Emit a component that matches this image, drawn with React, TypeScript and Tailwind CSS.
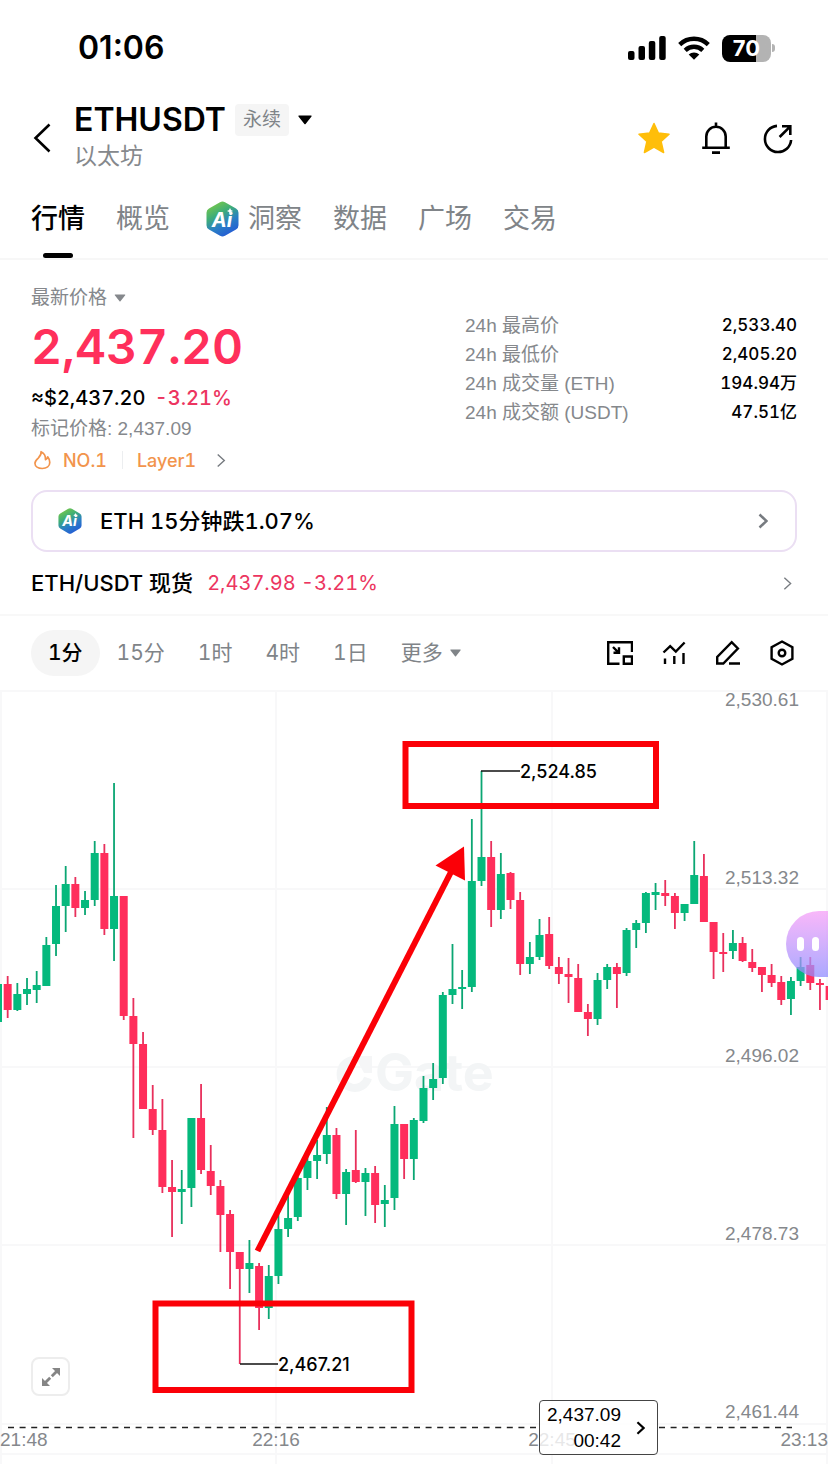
import { useId, useState } from "react";

type Candle = {
  up: boolean;
  high: number;
  low: number;
  top: number;
  bottom: number;
};

// [direction, high, low, body top, body bottom] in chart units
const rawCandles: [string, number, number, number, number][] = [
  ["u", 984, 1022, 984, 1022],
  ["d", 976, 1018, 984, 1010],
  ["u", 983, 1011, 994, 1010],
  ["u", 978, 1005, 989, 994],
  ["u", 971, 1003, 985, 990],
  ["u", 937, 986, 945, 986],
  ["u", 885, 956, 906, 944],
  ["u", 866, 932, 884, 906],
  ["d", 877, 917, 884, 908],
  ["u", 891, 915, 900, 908],
  ["u", 841, 906, 853, 900],
  ["d", 844, 935, 853, 929],
  ["u", 783, 961, 896, 929],
  ["d", 896, 1020, 896, 1016],
  ["d", 998, 1138, 1016, 1044],
  ["d", 1032, 1109, 1044, 1109],
  ["d", 1085, 1135, 1109, 1130],
  ["d", 1099, 1193, 1130, 1187],
  ["d", 1160, 1237, 1187, 1192],
  ["u", 1170, 1224, 1189, 1192],
  ["u", 1118, 1207, 1118, 1188],
  ["d", 1084, 1174, 1118, 1170],
  ["d", 1145, 1195, 1171, 1186],
  ["d", 1180, 1252, 1186, 1215],
  ["d", 1210, 1289, 1214, 1252],
  ["d", 1252, 1364, 1252, 1269],
  ["u", 1240, 1293, 1263, 1269],
  ["d", 1263, 1330, 1266, 1308],
  ["u", 1265, 1319, 1276, 1308],
  ["u", 1214, 1284, 1229, 1276],
  ["u", 1196, 1237, 1218, 1229],
  ["u", 1177, 1221, 1178, 1217],
  ["u", 1156, 1190, 1161, 1178],
  ["u", 1140, 1179, 1155, 1161],
  ["u", 1107, 1164, 1135, 1154],
  ["d", 1128, 1199, 1135, 1194],
  ["u", 1169, 1225, 1172, 1194],
  ["d", 1130, 1183, 1170, 1182],
  ["u", 1168, 1216, 1173, 1182],
  ["d", 1166, 1223, 1173, 1205],
  ["u", 1185, 1227, 1200, 1204],
  ["u", 1106, 1210, 1124, 1198],
  ["d", 1124, 1179, 1124, 1159],
  ["u", 1118, 1180, 1120, 1159],
  ["u", 1076, 1123, 1088, 1121],
  ["u", 1063, 1100, 1079, 1088],
  ["u", 992, 1084, 995, 1078],
  ["u", 944, 1004, 989, 995],
  ["u", 970, 1009, 987, 989],
  ["u", 819, 992, 881, 987],
  ["u", 771, 886, 857, 881],
  ["d", 841, 927, 857, 910],
  ["u", 853, 919, 874, 910],
  ["d", 872, 909, 873, 900],
  ["d", 892, 975, 900, 964],
  ["u", 942, 974, 957, 964],
  ["u", 919, 960, 935, 957],
  ["d", 917, 969, 934, 966],
  ["d", 957, 984, 967, 974],
  ["d", 958, 1003, 974, 977],
  ["d", 964, 1012, 978, 1012],
  ["d", 1004, 1036, 1012, 1019],
  ["u", 973, 1025, 980, 1019],
  ["u", 964, 989, 967, 980],
  ["d", 963, 1008, 967, 974],
  ["u", 928, 976, 930, 973],
  ["u", 920, 948, 923, 930],
  ["u", 892, 933, 893, 923],
  ["u", 883, 910, 892, 895],
  ["d", 880, 906, 893, 896],
  ["d", 893, 929, 896, 913],
  ["u", 904, 921, 904, 913],
  ["u", 841, 904, 875, 904],
  ["d", 854, 922, 876, 922],
  ["d", 922, 979, 922, 952],
  ["d", 933, 972, 952, 954],
  ["u", 930, 959, 943, 951],
  ["d", 937, 962, 943, 961],
  ["d", 949, 972, 962, 968],
  ["d", 967, 992, 967, 975],
  ["d", 964, 987, 975, 983],
  ["d", 976, 1005, 982, 1000],
  ["u", 977, 1015, 981, 999],
  ["u", 957, 986, 967, 981],
  ["d", 957, 990, 965, 983],
  ["d", 979, 1010, 983, 985],
  ["d", 986, 1000, 986, 1000],
];

const candles: Candle[] = rawCandles.map(([dir, high, low, top, bottom]) => ({
  up: dir === "u",
  high,
  low,
  top,
  bottom,
}));

const CANDLE_STEP = 9.67;
const FIRST_X = -2;

const tabs = ["行情", "概览", "洞察", "数据", "广场", "交易"];
const intervals = ["1分", "15分", "1时", "4时", "1日"];

const stats = [
  { label: "24h 最高价", value: "2,533.40" },
  { label: "24h 最低价", value: "2,405.20" },
  { label: "24h 成交量 (ETH)", value: "194.94万" },
  { label: "24h 成交额 (USDT)", value: "47.51亿" },
];

const priceAxis = [
  { label: "2,530.61", y: 706 },
  { label: "2,513.32", y: 884 },
  { label: "2,496.02", y: 1062 },
  { label: "2,478.73", y: 1240 },
  { label: "2,461.44", y: 1418 },
];

function AiLogo({ className }: { className: string }) {
  const id = useId();
  return (
    <svg viewBox="0 0 33 36" className={className} aria-hidden="true">
      <defs>
        <linearGradient id={id} x1="0.2" y1="0" x2="0.7" y2="1">
          <stop offset="0" stopColor="#7ccb46" />
          <stop offset="0.35" stopColor="#3fae77" />
          <stop offset="0.65" stopColor="#2b80c4" />
          <stop offset="1" stopColor="#2459d6" />
        </linearGradient>
      </defs>
      <path
        d="M14 1.2a5 5 0 0 1 5 0l11 6.3a5 5 0 0 1 2.5 4.3v12.4a5 5 0 0 1-2.5 4.3l-11 6.3a5 5 0 0 1-5 0L3 28.5A5 5 0 0 1 .5 24.200V11.800A5 5 0 0 1 3 7.500z"
        fill={`url(#${id})`}
      />
      <text x="16" y="25.500" textAnchor="middle" fontSize="20" fontWeight="700" fontStyle="italic" fill="#fff">
        Ai
      </text>
      <path d="M24 7l1 2 2 1-2 1-1 2-1-2-2-1 2-1z" fill="#fff" />
    </svg>
  );
}

function Chevron({ className }: { className: string }) {
  return (
    <svg viewBox="0 0 10 16" fill="none" stroke="currentColor" className={className} aria-hidden="true">
      <path d="M1.500 1.500L8.500 8l-7 6.500" />
    </svg>
  );
}

function Caret({ className }: { className: string }) {
  return (
    <svg viewBox="0 0 14 10" fill="currentColor" className={className} aria-hidden="true">
      <path d="M1 .5h12a.6.6 0 0 1 .5 1L7.600 9a.8.8 0 0 1-1.200 0L.5 1.500a.6.6 0 0 1 .5-1z" />
    </svg>
  );
}

function StatusBar() {
  return (
    <div className="flex h-24 items-center justify-between pr-[53px] pl-[78px]">
      <span className="text-[32px] font-semibold">01:06</span>
      <div className="flex items-center gap-3">
        <svg viewBox="0 0 38 24" className="h-6 w-[38px]" aria-hidden="true">
          <rect x="0" y="15" width="6.500" height="9" rx="2" />
          <rect x="10.500" y="10" width="6.500" height="14" rx="2" />
          <rect x="20.800" y="5" width="6.500" height="19" rx="2" />
          <rect x="31.200" y="0" width="6.500" height="24" rx="2" />
        </svg>
        <svg viewBox="0 0 32 24" className="h-6 w-8" aria-hidden="true">
          <g fill="none" stroke="#000" strokeWidth="4.400">
            <path d="M1.700 8.600a20.500 20.500 0 0 1 28.600 0" />
            <path d="M7.200 14.300a12.700 12.700 0 0 1 17.600 0" />
          </g>
          <path d="M16 23.800l-5.300-5.300a7.700 7.700 0 0 1 10.600 0z" />
        </svg>
        <div className="flex items-center gap-px">
          <div className="flex h-[27px] w-[49px] items-center justify-center rounded-[8px] bg-linear-to-r from-black from-70% to-[#b3b3b3] to-70%">
            <span className="text-[22px] font-bold text-white">70</span>
          </div>
          <span className="h-2 w-[3px] rounded-r-full bg-[#b3b3b3]" />
        </div>
      </div>
    </div>
  );
}

function Header() {
  return (
    <header className="flex h-[84px] items-center justify-between pr-[34px] pl-[33px]">
      <div className="flex items-center gap-[22px]">
        <button type="button" aria-label="返回">
          <svg viewBox="0 0 19 30" className="h-[30px] w-[19px]" fill="none" stroke="#000" strokeWidth="2.600">
            <path d="M16.500 1.500L2.500 15l14 13.500" />
          </svg>
        </button>
        <div className="flex flex-col">
          <button type="button" className="flex h-9 items-center">
            <h1 className="text-[32px] font-semibold">ETHUSDT</h1>
            <span className="ml-[9px] rounded bg-[#f5f5f5] px-2 py-[3px] text-[19px] leading-[26px] text-[#808488]">
              永续
            </span>
            <Caret className="ml-[9px] h-[10px] w-[14px]" />
          </button>
          <p className="text-[23px] leading-[36px] text-[#85888c]">以太坊</p>
        </div>
      </div>
      <div className="flex items-center gap-[30px]">
        <button type="button" aria-label="收藏">
          <svg viewBox="0 0 32 32" className="size-8" fill="#ffbe0a" stroke="#ffbe0a" strokeWidth="1.500" strokeLinejoin="round">
            <path d="M16 1.500l4.400 9.600 10.600 1.200-7.900 7.100 2.500 11.100L16 25.100l-9.600 5.400 2.500-11.100L1 12.300l10.600-1.200z" />
          </svg>
        </button>
        <button type="button" aria-label="提醒">
          <svg viewBox="0 0 32 32" className="size-8" fill="none" stroke="#000" strokeWidth="2.600">
            <path d="M6.300 26V14.500a9.700 9.700 0 0 1 19.400 0V26M2.200 25.800h27.600M16 4.800V.500M12 30.600h8" />
          </svg>
        </button>
        <button type="button" aria-label="分享">
          <svg viewBox="0 0 32 32" className="size-8" fill="none" stroke="#000" strokeWidth="2.600">
            <path d="M15 3.900A13.100 13.100 0 1 0 29.100 18M17.600 15L28.300 4.300M20 4.300h8.300v8.600" />
          </svg>
        </button>
      </div>
    </header>
  );
}

function Tabs() {
  const [active, setActive] = useState("行情");
  return (
    <nav className="flex h-20 gap-[31px] border-b-2 border-[#f7f7f7] px-[31px]">
      {tabs.map((tab) => (
        <button
          key={tab}
          type="button"
          onClick={() => setActive(tab)}
          className={`relative flex items-center gap-[9px] text-[27px] ${
            active === tab ? "font-medium text-black" : "text-[#808488]"
          } ${tab === "洞察" ? "pl-[5px]" : ""}`}
        >
          {tab === "洞察" && <AiLogo className="h-9 w-[33px]" />}
          {tab}
          {active === tab && (
            <span className="absolute bottom-0 left-1/2 h-[5px] w-[30px] -translate-x-1/2 rounded-full bg-black" />
          )}
        </button>
      ))}
    </nav>
  );
}

function PriceSummary() {
  return (
    <section className="flex justify-between px-[31px] pt-[23px] tabular-nums">
      <div>
        <button type="button" className="flex h-[30px] items-center gap-[7px] text-[19px] text-[#85888c]">
          最新价格
          <Caret className="h-2 w-3" />
        </button>
        <p className="text-[48px] leading-[68px] font-semibold text-[#ff2f5b]">2,437.20</p>
        <p className="text-[20px] leading-[34px] font-medium">
          ≈$2,437.20 <span className="ml-1 text-[#ec3560]">-3.21%</span>
        </p>
        <p className="font-['Liberation_Sans','Noto_Sans_CJK_SC',sans-serif] text-[19px] leading-7 text-[#85888c]">
          标记价格: 2,437.09
        </p>
        <a href="#rank" className="flex h-[34px] items-center text-[18px] font-medium text-[#f2944c]">
          <svg viewBox="0 0 18 20" className="mr-[12px] ml-[3px] h-5 w-[17px]" fill="none" stroke="currentColor" strokeWidth="1.800" strokeLinejoin="round">
            <path d="M7.500 1.200c.6 3.200-.9 4.700-3 6.700C2.600 9.600 1 11.200 1 13.500 1 16.800 4.400 19 8.700 19c4.600 0 8-2.500 8-6.300 0-2.400-.9-4.500-2.200-6-.2 1.600-1 2.500-2.300 3C12.400 6 10.800 2.700 7.500 1.200z" />
          </svg>
          NO.1
          <span className="mr-[14px] ml-[15px] h-[18px] w-px bg-[#eceef0]" />
          Layer1
          <Chevron className="ml-5 h-[15px] w-[10px] stroke-[1.5] text-[#777b80]" />
        </a>
      </div>
      <table className="mt-7 h-[116px] w-[332px] border-collapse self-start">
        <tbody>
          {stats.map((s) => (
            <tr key={s.label} className="h-[29px]">
              <th
                scope="row"
                className="p-0 text-left font-['Liberation_Sans','Noto_Sans_CJK_SC',sans-serif] text-[19px] leading-[29px] font-normal text-[#85888c]"
              >
                {s.label}
              </th>
              <td className="p-0 text-right text-[17px] leading-[29px] font-medium">{s.value}</td>
            </tr>
          ))}
        </tbody>
      </table>
    </section>
  );
}

function Toolbar() {
  const [interval, setInterval] = useState("1分");
  return (
    <div className="flex h-[76px] items-center justify-between border-t-2 border-[#f8f8f8] pr-[33px] pl-[31px]">
      <div className="flex items-center gap-[33px] text-[21px] text-[#808488] tabular-nums">
        {intervals.map((item) => (
          <button
            key={item}
            type="button"
            onClick={() => setInterval(item)}
            className={
              interval === item
                ? "-mr-4 h-[46px] rounded-full bg-[#f5f5f5] px-[17px] font-medium text-black"
                : "h-[46px]"
            }
          >
            {item}
          </button>
        ))}
        <button type="button" className="flex items-center gap-[7px]">
          更多
          <Caret className="h-2 w-[11px]" />
        </button>
      </div>
      <div className="flex gap-7">
        <button type="button" aria-label="小窗">
          <svg viewBox="0 0 26 26" className="size-[26px]" fill="none" stroke="#000" strokeWidth="2.400">
            <path d="M25 12V2.200H1.200V23.800H12.500M16.800 16.500h8.200v7.300h-8.200zM6 7l5.600 5.600M12 7.200v5.600H6.500" />
          </svg>
        </button>
        <button type="button" aria-label="指标">
          <svg viewBox="0 0 26 26" className="size-[26px]" fill="none" stroke="#000" strokeWidth="2.400">
            <path d="M2.500 12.500l6.700-6.300 5.600 5.300L23.600 2.500M4 18.500V24M13.300 16v8M22.500 13v11" />
          </svg>
        </button>
        <button type="button" aria-label="画线">
          <svg viewBox="0 0 26 26" className="size-[26px]" fill="none" stroke="#000" strokeWidth="2.400">
            <path d="M2.200 23.500v-6.600L16.700 2.200l6.200 6.300L8.300 23.500zM14 23.500h11" />
          </svg>
        </button>
        <button type="button" aria-label="设置">
          <svg viewBox="0 0 26 26" className="size-[26px]" fill="none" stroke="#000" strokeWidth="2.400">
            <path d="M13 1.500l10.400 5.800v11.400L13 24.500 2.600 18.700V7.300z" />
            <circle cx="13" cy="13" r="3.300" />
          </svg>
        </button>
      </div>
    </div>
  );
}

function CandleChart() {
  return (
    <svg viewBox="0 690 828 774" className="block h-auto w-full" role="img" aria-label="ETHUSDT K线">
      {/* grid */}
      <g stroke="#f8f8f9" strokeWidth="2">
        {[691, 889, 1067, 1245, 1424, 1454].map((y) => (
          <line key={y} x1="0" x2="828" y1={y} y2={y} />
        ))}
        {[1, 276, 552, 827].map((x) => (
          <line key={x} x1={x} x2={x} y1="690" y2="1464" />
        ))}
      </g>

      {/* watermark */}
      <g>
        <path d="M355 1060a14 14 0 1 0 13 18" fill="none" stroke="#f3f5f6" strokeWidth="8" />
        <path d="M355 1056h17v17h-8z" fill="#f5f6f7" />
        <text x="375" y="1091" fontSize="52" fontWeight="700" fill="#f3f5f6">
          Gate
        </text>
      </g>

      {candles.map((c, i) => {
        const x = FIRST_X + i * CANDLE_STEP;
        return (
          <g key={i} fill={c.up ? "#05b97d" : "#ff2e5b"}>
            <rect x={x - 0.9} y={c.high} width="1.8" height={c.low - c.high} fill={c.up ? "#0ba673" : "#e8305c"} />
            <rect x={x - 4} y={c.top} width="8" height={c.bottom - c.top} />
          </g>
        );
      })}

      <g className="font-['Liberation_Sans',sans-serif]" fontSize="19" fill="#85888c">
        {priceAxis.map((p) => (
          <text key={p.label} x="725" y={p.y}>
            {p.label}
          </text>
        ))}
        <text x="0" y="1446">21:48</text>
        <text x="276" y="1446" textAnchor="middle">22:16</text>
        <text x="552" y="1446" textAnchor="middle">22:45</text>
        <text x="828" y="1446" textAnchor="end">23:13</text>
      </g>

      {/* current price line */}
      <g stroke="#222" strokeWidth="1.3" strokeDasharray="6 5.600">
        <line x1="8" x2="539" y1="1427.500" y2="1427.500" />
        <line x1="659" x2="792" y1="1427.500" y2="1427.500" />
      </g>

      {/* high and low of the visible range */}
      <path d="M481 771h39M240 1364h38" stroke="#111" strokeWidth="1.500" />
      <g fontSize="18" fontWeight="500">
        <text x="520" y="778">2,524.85</text>
        <text x="278" y="1371">2,467.21</text>
      </g>

      <g fill="none" stroke="#fb0007" strokeWidth="6">
        <rect x="405.500" y="744" width="250.500" height="62" />
        <rect x="155.500" y="1303.500" width="256" height="86.500" />
        <path d="M257.500 1251L451 872" />
      </g>
      <path d="M464 846.500L435.500 865.500 465 880.500z" fill="#fb0007" />
    </svg>
  );
}

function ChartPanel() {
  return (
    <section className="relative overflow-hidden">
      <CandleChart />
      <button
        type="button"
        aria-label="助手"
        className="absolute top-[28.5%] right-0 flex h-[66px] w-[42px] items-center justify-end gap-2 rounded-l-full bg-linear-to-b from-[#f79ff8] to-[#8f8cff] pr-[9px] opacity-75"
      >
        <span className="h-[14px] w-[7px] rounded-full bg-white" />
        <span className="h-[14px] w-[7px] rounded-full bg-white" />
      </button>
      <button
        type="button"
        aria-label="全屏"
        className="absolute bottom-[68px] left-[31px] flex size-[39px] items-center justify-center rounded-lg border-2 border-[#ededed] bg-white"
      >
        <svg viewBox="0 0 20 20" className="size-5" fill="#858585" stroke="#858585">
          <path d="M11 1h8v8z" stroke="none" />
          <path d="M1 11v8h8z" stroke="none" />
          <path d="M10.800 9.200l5-5M9.200 10.800l-5 5" strokeWidth="2.800" />
        </svg>
      </button>
      <button
        type="button"
        className="absolute bottom-[9px] left-[65.1%] flex h-[55px] w-[119px] items-center justify-between rounded border border-[#444] bg-white/80 pr-3 pl-[7px] text-right font-['Liberation_Sans',sans-serif] text-[19px] leading-[26px]"
      >
        <span>
          2,437.09
          <br />
          00:42
        </span>
        <Chevron className="h-[14px] w-[9px] stroke-[2.5]" />
      </button>
    </section>
  );
}

export default function App() {
  return (
    <main className="min-h-screen w-full overflow-hidden bg-white font-['Inter','Noto_Sans_CJK_SC',sans-serif] text-black">
      <StatusBar />
      <Header />
      <Tabs />
      <PriceSummary />
      <div className="px-[31px] pt-[13px] tabular-nums">
        <a
          href="#ai"
          className="flex h-[62px] items-center rounded-[16px] border-2 border-[#ebdff3] pr-[27px] pl-[25px] text-[22px] font-medium"
        >
          <AiLogo className="mr-[18px] h-[26px] w-6" />
          ETH 15分钟跌1.07%
          <Chevron className="ml-auto h-4 w-[10px] stroke-[2.5] text-[#777b80]" />
        </a>
        <a href="#spot" className="flex h-[62px] items-center text-[22px]">
          <span className="font-medium">ETH/USDT 现货</span>
          <span className="ml-[14px] text-[20px] text-[#ec3560]">2,437.98 -3.21%</span>
          <Chevron className="mr-[5px] ml-auto h-[15px] w-[9px] stroke-[1.5] text-[#777b80]" />
        </a>
      </div>
      <Toolbar />
      <ChartPanel />
    </main>
  );
}
